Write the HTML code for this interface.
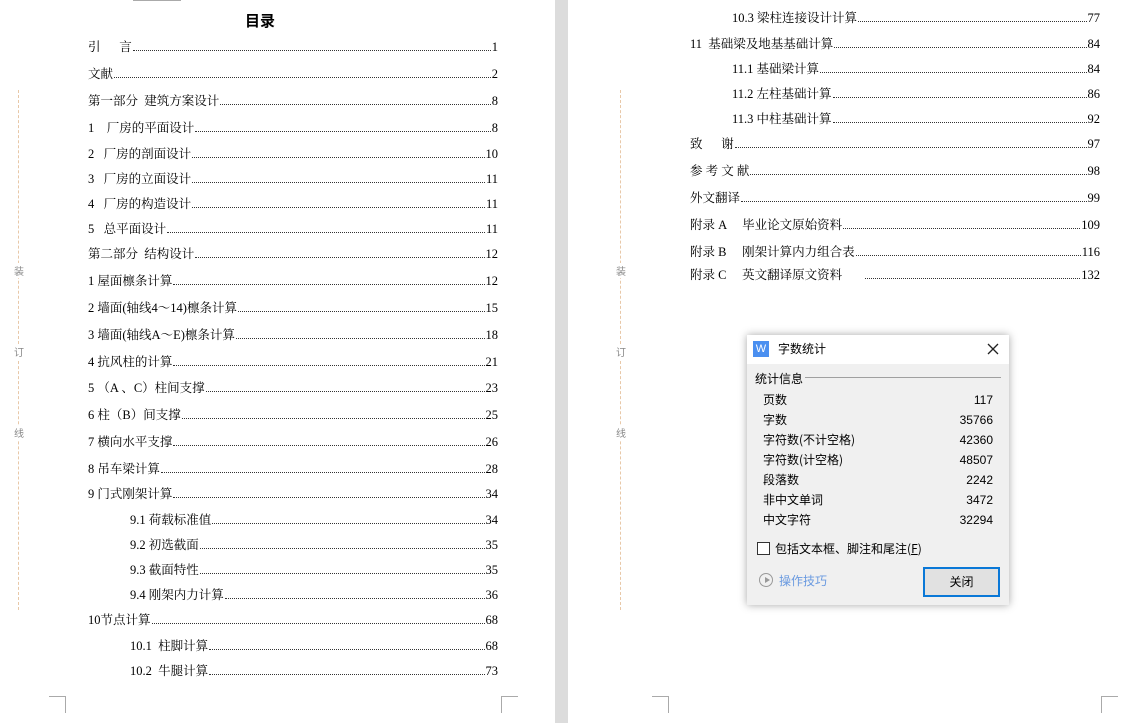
<!DOCTYPE html>
<html><head><meta charset="utf-8"><style>
*{margin:0;padding:0;box-sizing:border-box}
body{width:1139px;height:723px;overflow:hidden;background:#fff;position:relative;font-family:"Liberation Serif","Noto Serif CJK SC","Noto Sans CJK SC",serif;color:#000}
.gap{position:absolute;left:555px;top:0;width:13px;height:723px;background:#dcdcdc}
.r{position:absolute;display:flex;align-items:flex-end;font-size:12.5px;height:16px;line-height:16px;white-space:pre}
.r .d{flex:1;border-bottom:1px dotted #333;margin:0 1px 4px}
.dash{position:absolute;top:90px;height:520px;border-left:1px dashed #e8c8a8}
.m{position:absolute;font-size:10px;color:#888;font-family:"Noto Sans CJK SC",sans-serif;background:#fff}
.c{position:absolute;border-color:#aaa;border-style:solid;border-width:0}
.dlg{position:absolute;left:747px;top:335px;width:262px;height:270px;background:#f0f0f0;box-shadow:0 0 8px rgba(0,0,0,.35);font-family:"Noto Sans CJK SC",sans-serif;font-size:12px;color:#000}
.tb{height:29px;background:#fff;position:relative}
.st,.sv{position:absolute;font-size:12px;line-height:17px;height:17px}
.st{left:16px}
.sv{right:16px;font-family:"Liberation Sans",sans-serif;top:auto}
</style></head><body>
<div class="gap"></div>
<div class="c" style="left:133px;top:0;width:48px;border-top-width:1px"></div>
<div class="c" style="left:49px;top:696px;width:17px;height:17px;border-top-width:1px;border-right-width:1px"></div>
<div class="c" style="left:501px;top:696px;width:17px;height:17px;border-top-width:1px;border-left-width:1px"></div>
<div class="c" style="left:652px;top:696px;width:17px;height:17px;border-top-width:1px;border-right-width:1px"></div>
<div class="c" style="left:1101px;top:696px;width:17px;height:17px;border-top-width:1px;border-left-width:1px"></div>
<div class="dash" style="left:18px"></div>
<div class="dash" style="left:620px"></div>
<div class="m" style="left:14px;top:263px">装</div><div class="m" style="left:14px;top:344px">订</div><div class="m" style="left:14px;top:425px">线</div>
<div class="m" style="left:616px;top:263px">装</div><div class="m" style="left:616px;top:344px">订</div><div class="m" style="left:616px;top:425px">线</div>
<div style="position:absolute;left:0;width:520px;top:10px;text-align:center;font-size:15px;font-weight:bold;font-family:'Noto Sans CJK SC',sans-serif">目录</div>

<div class="r" style="left:88px;width:410px;top:39px">引      言<span class="d"></span>1</div>
<div class="r" style="left:88px;width:410px;top:66px">文献<span class="d"></span>2</div>
<div class="r" style="left:88px;width:410px;top:93px">第一部分  建筑方案设计<span class="d"></span>8</div>
<div class="r" style="left:88px;width:410px;top:120px">1    厂房的平面设计<span class="d"></span>8</div>
<div class="r" style="left:88px;width:410px;top:146px">2   厂房的剖面设计<span class="d"></span>10</div>
<div class="r" style="left:88px;width:410px;top:171px">3   厂房的立面设计<span class="d"></span>11</div>
<div class="r" style="left:88px;width:410px;top:196px">4   厂房的构造设计<span class="d"></span>11</div>
<div class="r" style="left:88px;width:410px;top:221px">5   总平面设计<span class="d"></span>11</div>
<div class="r" style="left:88px;width:410px;top:246px">第二部分  结构设计<span class="d"></span>12</div>
<div class="r" style="left:88px;width:410px;top:273px">1 屋面檩条计算<span class="d"></span>12</div>
<div class="r" style="left:88px;width:410px;top:300px">2 墙面(轴线4～14)檩条计算<span class="d"></span>15</div>
<div class="r" style="left:88px;width:410px;top:327px">3 墙面(轴线A～E)檩条计算<span class="d"></span>18</div>
<div class="r" style="left:88px;width:410px;top:354px">4 抗风柱的计算<span class="d"></span>21</div>
<div class="r" style="left:88px;width:410px;top:380px">5 （A 、C）柱间支撑<span class="d"></span>23</div>
<div class="r" style="left:88px;width:410px;top:407px">6 柱（B）间支撑<span class="d"></span>25</div>
<div class="r" style="left:88px;width:410px;top:434px">7 横向水平支撑<span class="d"></span>26</div>
<div class="r" style="left:88px;width:410px;top:461px">8 吊车梁计算<span class="d"></span>28</div>
<div class="r" style="left:88px;width:410px;top:486px">9 门式刚架计算<span class="d"></span>34</div>
<div class="r" style="left:130px;width:368px;top:512px">9.1 荷载标准值<span class="d"></span>34</div>
<div class="r" style="left:130px;width:368px;top:537px">9.2 初选截面<span class="d"></span>35</div>
<div class="r" style="left:130px;width:368px;top:562px">9.3 截面特性<span class="d"></span>35</div>
<div class="r" style="left:130px;width:368px;top:587px">9.4 刚架内力计算<span class="d"></span>36</div>
<div class="r" style="left:88px;width:410px;top:612px">10节点计算<span class="d"></span>68</div>
<div class="r" style="left:130px;width:368px;top:638px">10.1  柱脚计算<span class="d"></span>68</div>
<div class="r" style="left:130px;width:368px;top:663px">10.2  牛腿计算<span class="d"></span>73</div>

<div class="r" style="left:732px;width:368px;top:10px">10.3 梁柱连接设计计算<span class="d"></span>77</div>
<div class="r" style="left:690px;width:410px;top:36px">11  基础梁及地基基础计算<span class="d"></span>84</div>
<div class="r" style="left:732px;width:368px;top:61px">11.1 基础梁计算<span class="d"></span>84</div>
<div class="r" style="left:732px;width:368px;top:86px">11.2 左柱基础计算<span class="d"></span>86</div>
<div class="r" style="left:732px;width:368px;top:111px">11.3 中柱基础计算<span class="d"></span>92</div>
<div class="r" style="left:690px;width:410px;top:136px">致      谢<span class="d"></span>97</div>
<div class="r" style="left:690px;width:410px;top:163px">参 考 文 献<span class="d"></span>98</div>
<div class="r" style="left:690px;width:410px;top:190px">外文翻译<span class="d"></span>99</div>
<div class="r" style="left:690px;width:410px;top:217px">附录 A     毕业论文原始资料<span class="d"></span>109</div>
<div class="r" style="left:690px;width:410px;top:244px">附录 B     刚架计算内力组合表<span class="d"></span>116</div>
<div class="r" style="left:690px;width:410px;top:267px">附录 C     英文翻译原文资料       <span class="d"></span>132</div>

<div class="dlg">
 <div class="tb">
  <div style="position:absolute;left:6px;top:6px;width:16px;height:16px;background:#4a8ff0;color:#fff;font-size:11px;line-height:16px;text-align:center;font-family:'Liberation Sans',sans-serif">W</div>
  <div style="position:absolute;left:31px;top:5px">字数统计</div>
  <svg style="position:absolute;left:240px;top:8px" width="12" height="12"><path d="M1 1L11 11M11 1L1 11" stroke="#222" stroke-width="1.3"/></svg>
 </div>
 <div style="position:absolute;left:8px;top:35px">统计信息</div>
 <div style="position:absolute;left:58px;top:42px;width:196px;border-top:1px solid #a0a0a0"></div>
 <div class="st" style="top:56px">页数</div><div class="sv" style="top:57px">117</div>
 <div class="st" style="top:76px">字数</div><div class="sv" style="top:77px">35766</div>
 <div class="st" style="top:96px">字符数(不计空格)</div><div class="sv" style="top:97px">42360</div>
 <div class="st" style="top:116px">字符数(计空格)</div><div class="sv" style="top:117px">48507</div>
 <div class="st" style="top:136px">段落数</div><div class="sv" style="top:137px">2242</div>
 <div class="st" style="top:156px">非中文单词</div><div class="sv" style="top:157px">3472</div>
 <div class="st" style="top:176px">中文字符</div><div class="sv" style="top:177px">32294</div>
 <div style="position:absolute;left:10px;top:207px;width:13px;height:13px;border:1px solid #333;background:#fff"></div>
 <div style="position:absolute;left:28px;top:205px">包括文本框、脚注和尾注(<u>F</u>)</div>
 <div style="position:absolute;left:12px;top:238px;width:14px;height:14px;border:1px solid #999;border-radius:50%"></div>
 <div style="position:absolute;left:18px;top:242px;width:0;height:0;border-left:5px solid #999;border-top:3px solid transparent;border-bottom:3px solid transparent"></div>
 <div style="position:absolute;left:32px;top:237px;color:#6a9ae0">操作技巧</div>
 <div style="position:absolute;left:176px;top:232px;width:77px;height:30px;border:2px solid #0a78d7;background:#e1e1e1;text-align:center;line-height:26px">关闭</div>
</div>
</body></html>
